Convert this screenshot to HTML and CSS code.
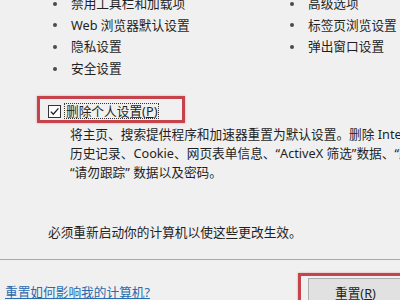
FILE: index.html
```html
<!DOCTYPE html>
<html lang="zh-CN">
<head>
<meta charset="utf-8">
<title>重置 Internet Explorer 设置</title>
<link rel="stylesheet" href="styles.css">
</head>
<body>
<div class="dialog">
  <div class="features">
    <ul class="col col-left">
      <li>禁用工具栏和加载项</li>
      <li>Web 浏览器默认设置</li>
      <li>隐私设置</li>
      <li>安全设置</li>
    </ul>
    <ul class="col">
      <li>高级选项</li>
      <li>标签页浏览设置</li>
      <li>弹出窗口设置</li>
    </ul>
  </div>

  <div class="option">
    <span class="check"><svg viewBox="0 0 11 11" width="11" height="11"><path d="M1.8 5.6 L4.3 8.2 L9.4 2.4" fill="none" stroke="#222" stroke-width="1.3"/></svg></span>
    <span class="label">删除个人设置(<u>P</u>)</span>
  </div>

  <div class="desc">
    <span class="line">将主页、搜索提供程序和加速器重置为默认设置。删除 Internet Explorer 临时文件、</span>
    <span class="line">历史记录、Cookie、网页表单信息、“ActiveX 筛选”数据、“跟踪保护”数据、</span>
    <span class="line">“请勿跟踪” 数据以及密码。</span>
  </div>

  <p class="notice">必须重新启动你的计算机以使这些更改生效。</p>

  <div class="footer">
    <a class="help" href="#">重置如何影响我的计算机?</a>
    <div class="focus"><button class="btn" type="button">重置(<u>R</u>)</button></div>
  </div>
</div>
</body>
</html>
```

FILE: styles.css
```css
html, body {
  margin: 0;
  padding: 0;
  overflow: hidden;
  background: #f0f0f0;
}

.dialog {
  width: 400px;
  height: 300px;
  overflow: hidden;
  font-family: "Noto Sans", "Noto Sans CJK SC", sans-serif;
  font-size: 12.7px;
  color: #1f1f1f;
}

.features {
  display: flex;
  margin-top: -7px;
  padding-left: 53px;
}

.col {
  list-style: none;
  margin: 0;
  padding: 0;
}

.col-left {
  width: 237px;
}

.col li {
  display: flex;
  align-items: center;
  height: 21.6px;
  line-height: 21.6px;
  white-space: nowrap;
}

.col li::before {
  content: "";
  flex: none;
  width: 4px;
  height: 4px;
  border-radius: 50%;
  background: #4a4a4a;
  margin-right: 14px;
}

.option {
  display: flex;
  align-items: center;
  box-sizing: border-box;
  width: 148px;
  height: 27px;
  margin: 17px 0 0 37px;
  padding: 3px 0 0 8px;
  border: 3px solid #c7434c;
  box-shadow: 0 0 2px rgba(199, 67, 76, 0.45);
}

.check {
  box-sizing: border-box;
  flex: none;
  display: flex;
  align-items: center;
  justify-content: center;
  width: 13px;
  height: 13px;
  border: 1px solid #333;
  background: #fdfdfd;
}

.label {
  margin-left: 4px;
  padding: 0 1px;
  line-height: 14px;
  outline: 1px dotted #333;
  white-space: nowrap;
}

.desc {
  margin: 2px 0 0 70px;
  width: 330px;
  overflow: hidden;
}

.line {
  display: block;
  line-height: 18.6px;
  white-space: nowrap;
}

.notice {
  margin: 42px 0 0 48px;
  line-height: 18.5px;
  white-space: nowrap;
}

.footer {
  display: flex;
  align-items: flex-start;
  margin-top: 17px;
  border-top: 1px solid #a9a9a9;
  padding: 13px 0 0 5px;
}

.help {
  flex: none;
  width: 150px;
  margin-top: 10px;
  line-height: 18px;
  color: #2a6aae;
  text-decoration: underline;
  white-space: nowrap;
}

.focus {
  flex: none;
  margin-left: 143px;
  padding: 2px 6px 4px 7px;
  border: 3px solid #c7434c;
  box-shadow: 0 0 2px rgba(199, 67, 76, 0.45);
}

.btn {
  display: block;
  width: 94px;
  height: 30px;
  margin: 0;
  padding: 0;
  border: 1px solid #adadad;
  background: #e1e1e1;
  font-family: "Noto Sans", "Noto Sans CJK SC", sans-serif;
  font-size: 12.7px;
  color: #1f1f1f;
  text-align: left;
  text-indent: 26px;
}
```
